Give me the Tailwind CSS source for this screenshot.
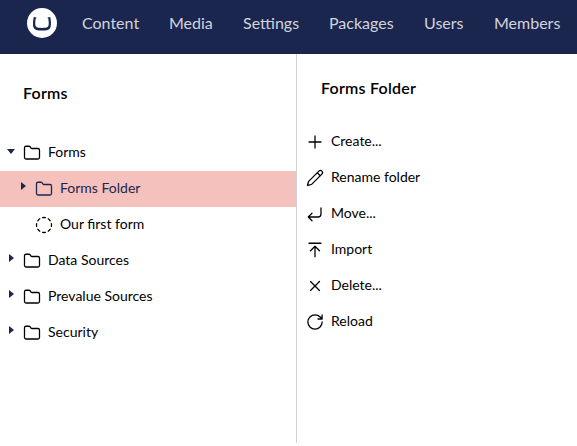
<!DOCTYPE html>
<html lang="en">
<head>
<meta charset="utf-8">
<title>Forms</title>
<script src="https://cdn.jsdelivr.net/npm/@tailwindcss/browser@4"></script>
</head>
<body class="flex h-[446px] w-[577px] flex-col overflow-hidden bg-white font-['Lato',sans-serif] text-black">
<svg class="hidden">
  <symbol id="folder" viewBox="0 0 24 24"><path d="M20 20a2 2 0 0 0 2-2V8a2 2 0 0 0-2-2h-7.9a2 2 0 0 1-1.69-.9L9.6 3.9A2 2 0 0 0 7.93 3H4a2 2 0 0 0-2 2v13a2 2 0 0 0 2 2Z"/></symbol>
</svg>
<header class="flex h-[54px] shrink-0 items-center bg-[#1b264f] pb-2 pl-[27px]">
  <svg class="mr-[25px] size-[30px] shrink-0" viewBox="0 0 30 30"><circle cx="15" cy="15" r="15" fill="#fff"/><path d="M6.8 9.1C5.8 13 5.7 18.6 7.1 20.6C8.3 22.4 11.2 22.6 15 22.6S21.7 22.4 22.9 20.6C24.3 18.6 24.2 13 23.2 9.1L20.6 9.4V10.2L21.3 10.4C21.9 13.6 22 17.4 21.1 18.6C20.2 19.8 17.8 20 15 20S9.8 19.8 8.9 18.6C8 17.4 8.1 13.6 8.7 10.4L9.4 10.2V9.4Z" fill="#1b264f"/></svg>
  <nav class="flex items-center whitespace-nowrap text-[16px] leading-6 text-[#d1d4dc]">
    <a class="w-[87px]">Content</a><a class="w-[74px]">Media</a><a class="w-[86px]">Settings</a><a class="w-[95px]">Packages</a><a class="w-[70px]">Users</a><a>Members</a>
  </nav>
</header>
<main class="flex h-[389px] text-[14px] leading-5">
  <section class="w-[297px] shrink-0 border-r border-[#d0d0d0]">
    <h1 class="h-[81px] pl-[23px] pt-[29px] text-[16px] leading-5 font-semibold tracking-[0.23px]">Forms</h1>
    <ul class="fill-none stroke-black stroke-[1.7] [stroke-linecap:round] [stroke-linejoin:round]">
      <li class="flex h-9 items-center pl-[7px]">
        <svg class="mr-2 mb-1 h-[5px] w-2 fill-[#1b264f] stroke-none" viewBox="0 0 8 5"><path d="M0 0h8L4 5z"/></svg>
        <svg class="mr-[7px] size-[18px]"><use href="#folder"/></svg><span class="pb-0.5">Forms</span></li>
      <li class="flex h-9 items-center bg-[#f5c1bc] pl-[21px] text-[#1b264f]">
        <svg class="mr-[9px] mb-[6px] h-2 w-[5px] fill-[#1b264f] stroke-none" viewBox="0 0 5 8"><path d="M0 0v8l5-4z"/></svg>
        <svg class="mr-[7px] size-[18px] stroke-[#1b264f]"><use href="#folder"/></svg><span class="pb-0.5">Forms Folder</span></li>
      <li class="flex h-9 items-center pl-[35px]">
        <svg class="mr-[7px] size-[18px]" viewBox="0 0 24 24"><path d="M10.1 2.18a9.93 9.93 0 0 1 3.8 0M17.6 3.71a9.95 9.95 0 0 1 2.69 2.7M21.82 10.1a9.93 9.93 0 0 1 0 3.8M20.29 17.6a9.95 9.95 0 0 1-2.7 2.69M13.9 21.82a9.94 9.94 0 0 1-3.8 0M6.4 20.29a9.95 9.95 0 0 1-2.69-2.7M2.18 13.9a9.93 9.93 0 0 1 0-3.8M3.71 6.4a9.95 9.95 0 0 1 2.7-2.69"/></svg><span class="pb-0.5">Our first form</span></li>
      <li class="flex h-9 items-center pl-[9px]">
        <svg class="mr-[9px] mb-[6px] h-2 w-[5px] fill-[#1b264f] stroke-none" viewBox="0 0 5 8"><path d="M0 0v8l5-4z"/></svg>
        <svg class="mr-[7px] size-[18px]"><use href="#folder"/></svg><span class="pb-0.5">Data Sources</span></li>
      <li class="flex h-9 items-center pl-[9px]">
        <svg class="mr-[9px] mb-[6px] h-2 w-[5px] fill-[#1b264f] stroke-none" viewBox="0 0 5 8"><path d="M0 0v8l5-4z"/></svg>
        <svg class="mr-[7px] size-[18px]"><use href="#folder"/></svg><span class="pb-0.5">Prevalue Sources</span></li>
      <li class="flex h-9 items-center pl-[9px]">
        <svg class="mr-[9px] mb-[6px] h-2 w-[5px] fill-[#1b264f] stroke-none" viewBox="0 0 5 8"><path d="M0 0v8l5-4z"/></svg>
        <svg class="mr-[7px] size-[18px]"><use href="#folder"/></svg><span class="pb-0.5">Security</span></li>
    </ul>
  </section>
  <section class="pl-[9px]">
    <h2 class="h-[70px] pl-[15px] pt-6 text-[16px] leading-5 font-semibold tracking-[0.23px]">Forms Folder</h2>
    <ul class="fill-none stroke-black stroke-[1.7] [stroke-linecap:round] [stroke-linejoin:round]">
      <li class="flex h-9 items-center gap-[7px]"><svg class="size-[18px]" viewBox="0 0 24 24"><path d="M4 12h16M12 4v16"/></svg><span class="pb-0.5">Create...</span></li>
      <li class="flex h-9 items-center gap-[7px]"><svg class="size-[18px]" viewBox="0 0 24 24"><path d="M21.17 6.81a1 1 0 0 0-3.98-3.98L3.84 16.17a2 2 0 0 0-.5.83l-1.32 4.35a.5.5 0 0 0 .62.62l4.35-1.32a2 2 0 0 0 .83-.5zM15 5l4 4"/></svg><span class="pb-0.5">Rename folder</span></li>
      <li class="flex h-9 items-center gap-[7px]"><svg class="size-[18px]" viewBox="0 0 24 24"><path d="m8 11-5 5 5 5M20 4v8a4 4 0 0 1-4 4H3"/></svg><span class="pb-0.5">Move...</span></li>
      <li class="flex h-9 items-center gap-[7px]"><svg class="size-[18px]" viewBox="0 0 24 24"><path d="M4 3h16M18 13l-6-6-6 6M12 7v14"/></svg><span class="pb-0.5">Import</span></li>
      <li class="flex h-9 items-center gap-[7px]"><svg class="size-[18px]" viewBox="0 0 24 24"><path d="M18 6 6 18M6 6l12 12"/></svg><span class="pb-0.5">Delete...</span></li>
      <li class="flex h-9 items-center gap-[7px]"><svg class="size-[18px]" viewBox="0 0 24 24"><path d="M21.5 12a9.5 9.5 0 1 1-9.5-9.5c2.66 0 5.1 1 7 2.8L21.5 8M21.5 2.5V8H16"/></svg><span class="pb-0.5">Reload</span></li>
    </ul>
  </section>
</main>
</body>
</html>
